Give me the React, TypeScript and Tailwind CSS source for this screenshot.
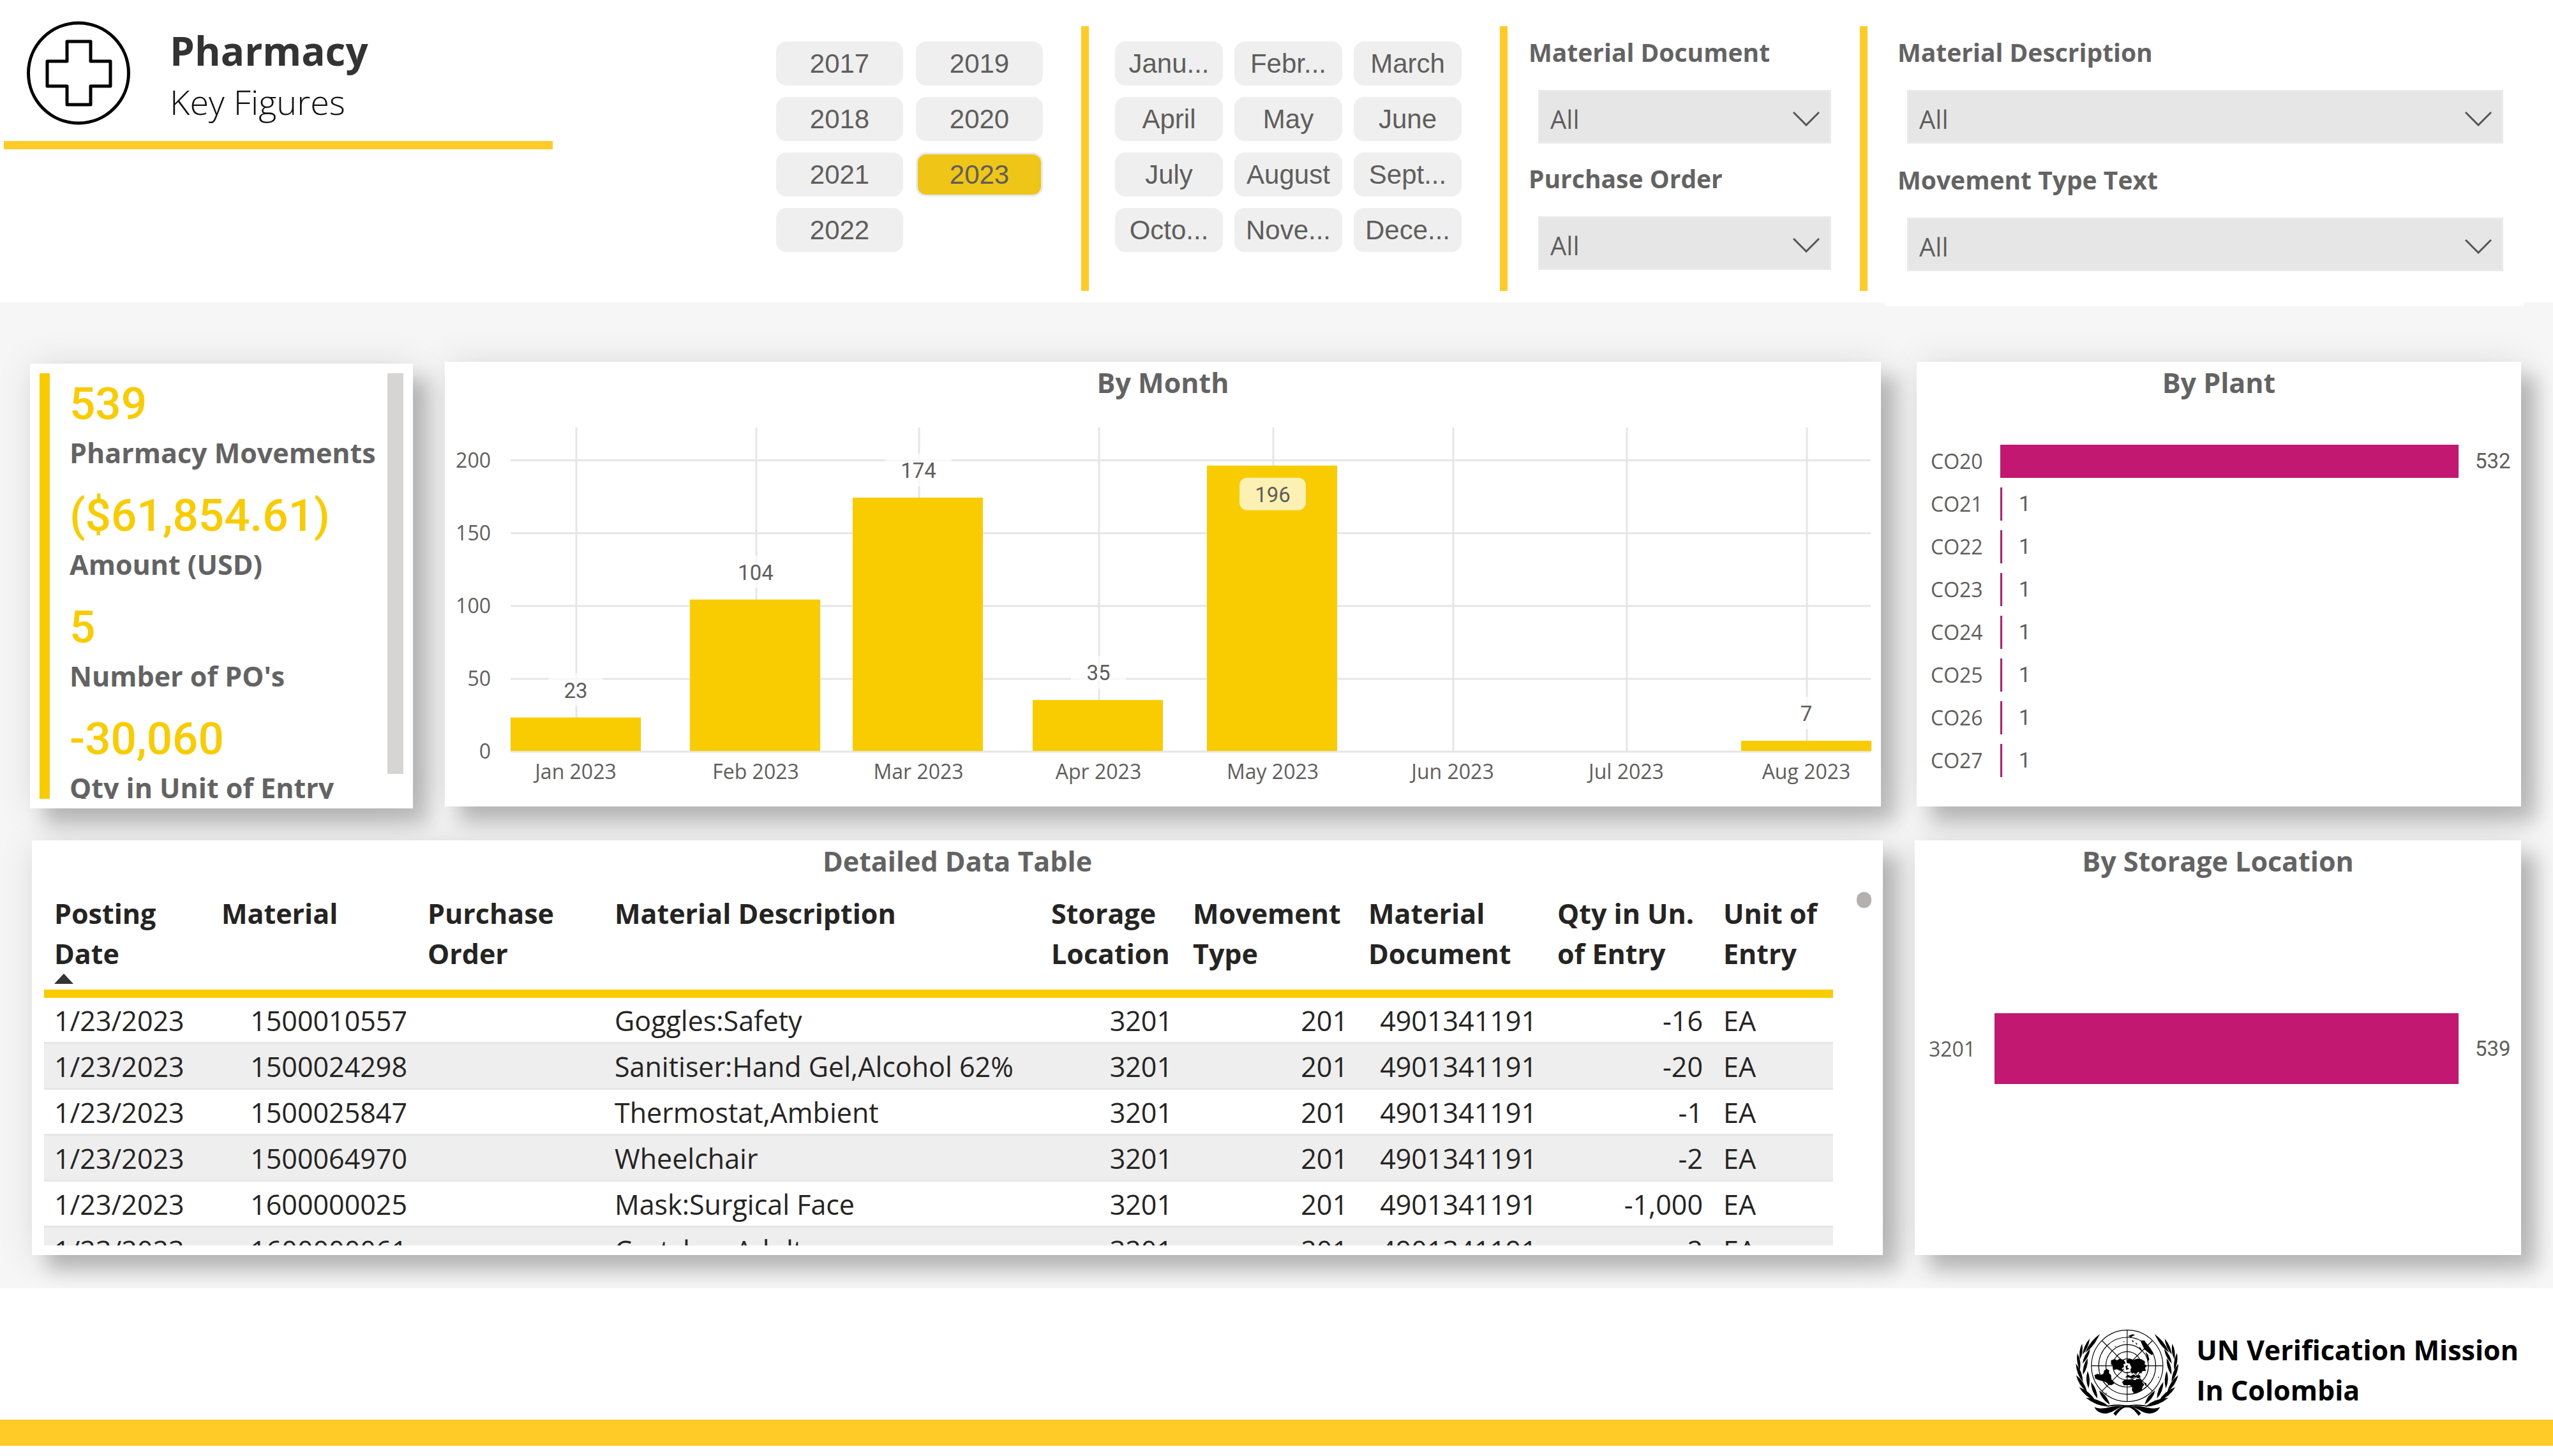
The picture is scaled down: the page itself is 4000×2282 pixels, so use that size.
import { useState } from 'react';
import type { ReactNode } from 'react';

const years = ['2017', '2019', '2018', '2020', '2021', '2023', '2022'];

const months = [
  'Janu...', 'Febr...', 'March',
  'April', 'May', 'June',
  'July', 'August', 'Sept...',
  'Octo...', 'Nove...', 'Dece...',
];

const keyFigures = [
  { value: '539', label: 'Pharmacy Movements' },
  { value: '($61,854.61)', label: 'Amount (USD)' },
  { value: '5', label: "Number of PO's" },
  { value: '-30,060', label: 'Qty in Unit of Entry' },
];

const monthly = [
  { label: 'Jan 2023', x: 206, count: 23 },
  { label: 'Feb 2023', x: 488, count: 104 },
  { label: 'Mar 2023', x: 743, count: 174 },
  { label: 'Apr 2023', x: 1025, count: 35 },
  { label: 'May 2023', x: 1298, count: 196 },
  { label: 'Jun 2023', x: 1580, count: 0 },
  { label: 'Jul 2023', x: 1852, count: 0 },
  { label: 'Aug 2023', x: 2134, count: 7 },
];

const plants = [
  { label: 'CO20', value: 532 },
  { label: 'CO21', value: 1 },
  { label: 'CO22', value: 1 },
  { label: 'CO23', value: 1 },
  { label: 'CO24', value: 1 },
  { label: 'CO25', value: 1 },
  { label: 'CO26', value: 1 },
  { label: 'CO27', value: 1 },
];

const columns = [
  { lines: ['Posting', 'Date'], col: 'w-[262px]', align: 'text-left', sorted: true },
  { lines: ['Material'], col: 'w-[323px]', align: 'text-right' },
  { lines: ['Purchase', 'Order'], col: 'w-[293px]', align: 'text-right' },
  { lines: ['Material Description'], col: 'w-[684px]', align: 'text-left' },
  { lines: ['Storage', 'Location'], col: 'w-[222px]', align: 'text-right' },
  { lines: ['Movement', 'Type'], col: 'w-[275px]', align: 'text-right' },
  { lines: ['Material', 'Document'], col: 'w-[296px]', align: 'text-right' },
  { lines: ['Qty in Un.', 'of Entry'], col: 'w-[260px]', align: 'text-right' },
  { lines: ['Unit of', 'Entry'], col: 'w-[188px]', align: 'text-left' },
];

const rows = [
  ['1/23/2023', '1500010557', '', 'Goggles:Safety', '3201', '201', '4901341191', '-16', 'EA'],
  ['1/23/2023', '1500024298', '', 'Sanitiser:Hand Gel,Alcohol 62%', '3201', '201', '4901341191', '-20', 'EA'],
  ['1/23/2023', '1500025847', '', 'Thermostat,Ambient', '3201', '201', '4901341191', '-1', 'EA'],
  ['1/23/2023', '1500064970', '', 'Wheelchair', '3201', '201', '4901341191', '-2', 'EA'],
  ['1/23/2023', '1600000025', '', 'Mask:Surgical Face', '3201', '201', '4901341191', '-1,000', 'EA'],
  ['1/23/2023', '1600000061', '', 'Crutches,Adult', '3201', '201', '4901341191', '-2', 'EA'],
];

function Chip({ label, active, onClick }: { label: string; active: boolean; onClick: () => void }) {
  return (
    <button
      type="button"
      aria-pressed={active}
      onClick={onClick}
      className={
        active
          ? 'h-[69px] rounded-2xl border-[3px] border-[#e6e9f0] bg-[#efc518] text-[#605e5c]'
          : 'h-[69px] rounded-2xl border-[3px] border-[#efefef] bg-[#efefef] text-[#605e5c]'
      }
    >
      {label}
    </button>
  );
}

function Divider() {
  return <div className="mt-[41px] h-[415px] w-[12px] shrink-0 bg-[#fecb27]" />;
}

function Filter({ id, label }: { id: string; label: string }) {
  return (
    <div>
      <label htmlFor={id} className="block text-[39px] leading-[54px] font-bold text-[#636363]">
        {label}
      </label>
      <div className="relative mt-[32px] ml-[15px]">
        <select
          id={id}
          className="block h-[84px] w-full appearance-none border-[3px] border-[#eaeaea] bg-[#e6e6e6] px-[16px] pt-[8px] text-[40px] text-[#605e5c]"
        >
          <option>All</option>
        </select>
        <svg
          viewBox="0 0 42 24"
          className="pointer-events-none absolute top-[33px] right-[18px] h-[24px] w-[42px]"
          fill="none"
          stroke="#555"
          strokeWidth="3"
        >
          <path d="M1 2 L21 22 L41 2" />
        </svg>
      </div>
    </div>
  );
}

function Card({ title, className, children }: { title?: string; className: string; children: ReactNode }) {
  return (
    <section
      className={`relative bg-white shadow-[24px_24px_28px_rgba(0,0,0,0.21),4px_4px_56px_rgba(0,0,0,0.12)] ${className}`}
    >
      {title && (
        <h2 className="pt-[3px] text-center text-[43px] leading-[60px] font-bold text-[#636363]">{title}</h2>
      )}
      {children}
    </section>
  );
}

function MonthChart() {
  const base = 547;
  const unit = 2.282;
  const barLeft = (x: number) => (x === 206 ? 103 : x === 2134 ? 2031 : x - 104);

  return (
    <svg viewBox="0 0 2250 634" className="block w-full" role="img" aria-label="Movements by month">
      <g stroke="#e6e6e6" strokeWidth="3">
        {[0, 50, 100, 150, 200].map((tick) => (
          <line key={tick} x1="103" x2="2234" y1={base + 1 - tick * unit} y2={base + 1 - tick * unit} />
        ))}
        {monthly.map((m) => (
          <line key={m.label} x1={m.x} x2={m.x} y1="40" y2={base} />
        ))}
      </g>
      <g className="fill-[#605e5c] text-[32px]" textAnchor="end">
        {[0, 50, 100, 150, 200].map((tick) => (
          <text key={tick} x="72" y={base + 12 - tick * unit}>
            {tick}
          </text>
        ))}
      </g>
      {monthly.map((m) => {
        const top = base - m.count * unit;
        const inside = m.count > 190;
        const pill = m.count > 99 ? 104 : m.count > 9 ? 86 : 68;
        const pillTop = inside ? top + 19 : top - 69;
        return (
          <g key={m.label} textAnchor="middle" className="fill-[#605e5c] text-[32px]">
            {m.count > 0 && (
              <>
                <rect x={barLeft(m.x)} y={top} width="204" height={m.count * unit} fill="#f8cc00" />
                <rect x={m.x - 1 - pill / 2} y={pillTop} width={pill} height="51" rx="12" fill="#fff" fillOpacity="0.7" />
                <text x={m.x - 1} y={pillTop + 38} className="font-[Roboto] text-[33px]">
                  {m.count}
                </text>
              </>
            )}
            <text x={m.x - 1} y="591">
              {m.label}
            </text>
          </g>
        );
      })}
    </svg>
  );
}

function HBar({ label, value, max, tall }: { label: string; value: number; max: number; tall?: boolean }) {
  return (
    <div className={`flex items-center pl-[22px] ${tall ? 'h-[111px]' : 'h-[67px]'}`}>
      <span className={`shrink-0 text-[32px] ${tall ? 'w-[103px]' : 'w-[109px]'}`}>{label}</span>
      <div className="flex flex-1 items-center pr-[98px]">
        <div
          className={`min-w-[3px] shrink-0 bg-[#c31872] ${tall ? 'h-[111px]' : 'h-[52px]'}`}
          style={{ width: `${(value / max) * 100}%` }}
        />
        <span className="ml-[26px] font-[Roboto] text-[33px]">{value}</span>
      </div>
    </div>
  );
}

// Leaves of the left branch: [base x, base y, tip x, tip y, width]
const leaves = [
  [88, 138, 152, 62, 13], [70, 160, 104, 84, 13], [58, 182, 68, 108, 13],
  [58, 232, 46, 152, 14], [72, 288, 39, 202, 16], [92, 336, 40, 256, 17],
  [132, 378, 54, 312, 18], [196, 404, 86, 362, 20],
  [82, 150, 138, 88, 11], [70, 202, 106, 132, 14], [72, 254, 94, 176, 15],
  [98, 318, 94, 236, 15], [140, 366, 110, 288, 16], [198, 394, 148, 328, 17],
];

function leafPath([bx, by, tx, ty, w]: number[]) {
  const mx = (bx + tx) / 2;
  const my = (by + ty) / 2;
  const len = Math.hypot(tx - bx, ty - by);
  const nx = (-(ty - by) / len) * w;
  const ny = ((tx - bx) / len) * w;
  return `M${bx} ${by}Q${mx + nx} ${my + ny} ${tx} ${ty}Q${mx - nx} ${my - ny} ${bx} ${by}Z`;
}

function Branch() {
  return (
    <>
      {leaves.map((leaf) => (
        <path key={leaf.join()} d={leafPath(leaf)} />
      ))}
      <path d="M126 406C170 426 208 392 264 404C232 404 204 446 160 434C144 430 132 420 126 406Z" />
      <path d="M176 402C210 392 240 392 296 400L290 407C262 404 248 418 226 447L215 436C228 420 244 408 262 402C230 398 204 404 176 402Z" />
    </>
  );
}

function Emblem() {
  return (
    <svg viewBox="38 42 482 408" className="h-[136px] w-[161px]" role="img" aria-label="United Nations emblem">
      <g fill="none" stroke="#000" strokeWidth="3.5">
        {[168, 134, 100, 67, 33].map((r) => (
          <circle key={r} cx="280" cy="212" r={r} />
        ))}
        <path d="M280 44V380M112 212H448M161 93L399 331M399 93L161 331" />
      </g>
      <g>
        <path d="M204 186L222 180L232 186L246 178L262 184L272 196L262 206L268 216L254 224L262 232L248 236L232 228L220 232L212 222L216 210L204 206Z" />
        <path d="M172 234L184 226L196 234L194 246L204 256L206 276L220 294L208 302L194 302L182 290L166 284L148 280L130 272L126 256L140 250L156 254L168 250Z" />
        <path d="M276 186L292 178L310 184L330 178L350 182L364 192L362 204L372 212L364 222L368 236L352 236L346 248L332 240L324 250L312 244L302 250L296 236L300 218L290 206L280 200Z" />
        <path d="M256 288L270 276L290 278L304 276L318 280L324 274L342 274L352 290L360 300L352 312L348 328L326 340L312 342L302 326L304 310L290 302L264 304Z" />
        <path d="M342 94L360 92L374 110L388 128L404 154L396 162L380 150L362 136L352 116Z" />
        <path d="M270 266L284 254L296 260L310 252L322 260L338 254L344 266L330 270L316 264L302 272L288 266Z" />
        <path d="M284 72L304 64L318 66L306 72L298 78ZM302 90L312 96L306 102ZM318 102L328 108L324 114ZM336 122L344 128L350 144L340 136ZM366 146L378 160L384 182L376 196L374 178ZM362 290L370 294L370 306L364 304ZM262 96L268 98L264 102ZM222 118L228 121L223 124ZM426 262L431 266L426 270ZM178 338L184 341L180 346Z" />
      </g>
      <path d="M264 210L276 198L292 202L298 216L292 234L278 240L266 230Z" fill="#fff" />
      <path d="M272 214L284 208L280 220L290 226L276 232Z" />
      <Branch />
      <g transform="translate(560 0) scale(-1 1)">
        <Branch />
      </g>
    </svg>
  );
}

export default function App() {
  const [year, setYear] = useState('2023');
  const [month, setMonth] = useState('');

  return (
    <div className="bg-white font-['Open_Sans','Noto_Sans',sans-serif] text-[#605e5c]">
      {/* Title and slicers */}
      <header className="flex">
        <div className="w-[1216px] shrink-0 pt-[33px] pb-[240px]">
          <div className="flex gap-[62px] pl-[42px]">
            <svg viewBox="0 0 162 163" className="h-[163px] w-[162px]" fill="none" stroke="#000" strokeWidth="5">
              <circle cx="81" cy="81.5" r="78.5" />
              <path d="M63 32H100V63H131V102H100V131H63V102H32V63H63Z" strokeLinejoin="round" />
            </svg>
            <div className="pt-[4px]">
              <h1 className="text-[62px] leading-[84px] font-bold text-[#333]">Pharmacy</h1>
              <p className="text-[54px] leading-[76px] font-light text-[#111]">Key Figures</p>
            </div>
          </div>
          <div className="mt-[24px] ml-[6px] h-[13px] w-[860px] bg-[#fecb27]" />
        </div>

        <div className="mr-[60px] grid w-[418px] shrink-0 grid-cols-2 content-start gap-x-[20px] gap-y-[18px] pt-[65px] font-['Liberation_Sans',sans-serif] text-[42px]">
          {years.map((y) => (
            <Chip key={y} label={y} active={y === year} onClick={() => setYear(y)} />
          ))}
        </div>
        <Divider />
        <div className="mr-[60px] ml-[41px] grid w-[543px] shrink-0 grid-cols-3 content-start gap-x-[18px] gap-y-[18px] pt-[65px] font-['Liberation_Sans',sans-serif] text-[42px]">
          {months.map((m) => (
            <Chip key={m} label={m} active={m === month} onClick={() => setMonth(m)} />
          ))}
        </div>
        <Divider />
        <div className="mr-[45px] ml-[33px] flex w-[474px] shrink-0 flex-col gap-[28px] pt-[55px]">
          <Filter id="material-document" label="Material Document" />
          <Filter id="purchase-order" label="Purchase Order" />
        </div>
        <Divider />
        <div className="relative z-10 mr-[46px] -mb-[6px] ml-[27px] flex flex-1 flex-col gap-[30px] bg-white pt-[55px] pr-[32px] pl-[20px]">
          <Filter id="material-description" label="Material Description" />
          <Filter id="movement-type" label="Movement Type Text" />
        </div>
      </header>

      <main className="overflow-hidden bg-[#f6f6f6] pt-[93px] pr-[50px] pb-[52px]">
        <div className="flex items-start gap-[50px] pl-[47px]">
          <Card className="mt-[3px] w-[600px] shrink-0 px-[15px] py-[15px]">
            <div className="flex h-[667px] overflow-hidden">
              <div className="w-[16px] bg-[#f8cc00]" />
              <dl className="flex-1 pl-[31px]">
                {keyFigures.map((f) => (
                  <div key={f.label} className="flex h-[175px] flex-col-reverse justify-end whitespace-nowrap">
                    <dt className="text-[43px] leading-[60px] font-bold text-[#636363]">{f.label}</dt>
                    <dd className="font-[Roboto] text-[71px] leading-[95px] font-medium text-[#f8cc00]">{f.value}</dd>
                  </div>
                ))}
              </dl>
              <div className="h-[628px] w-[25px] bg-[#d6d5d3]" />
            </div>
          </Card>

          <Card title="By Month" className="flex-1">
            <MonthChart />
          </Card>

          <Card title="By Plant" className="ml-[6px] h-[697px] w-[947px] shrink-0">
            <div className="mt-[59px]">
              {plants.map((p) => (
                <HBar key={p.label} label={p.label} value={p.value} max={532} />
              ))}
            </div>
          </Card>
        </div>

        <div className="mt-[50px] flex gap-[50px] pl-[50px]">
          <Card title="Detailed Data Table" className="flex flex-1 flex-col pb-[15px]">
            <div className="flex h-[572px] items-start justify-between overflow-hidden pr-[18px] pl-[19px]">
              <table className="mr-[37px] w-full table-fixed border-separate border-spacing-0 text-[43px] text-[#252423]">
                <thead>
                  <tr>
                    {columns.map((c) => (
                      <th
                        key={c.lines.join(' ')}
                        className={`${c.col} border-b-[13px] border-[#f8cc00] px-[16px] pt-[20px] pb-[9px] text-left align-top leading-[63px] font-bold whitespace-nowrap`}
                      >
                        {c.lines.map((line) => (
                          <div key={line}>{line}</div>
                        ))}
                        {c.sorted && (
                          <svg viewBox="0 0 30 16" className="block h-[16px] w-[30px]" fill="#333">
                            <path d="M15 0L30 16H0Z" />
                          </svg>
                        )}
                      </th>
                    ))}
                  </tr>
                </thead>
                <tbody>
                  {rows.map((row) => (
                    <tr key={row[1]} className="even:bg-[#eeeeee]">
                      {row.map((cell, i) => (
                        <td
                          key={columns[i].lines.join(' ')}
                          className={`border-b-[3px] border-[#e6e6e6] px-[16px] pt-[3px] leading-[66px] whitespace-nowrap ${columns[i].align}`}
                        >
                          {cell}
                        </td>
                      ))}
                    </tr>
                  ))}
                </tbody>
              </table>
              <div className="mt-[18px] h-[25px] w-[23px] shrink-0 rounded-full bg-[#b3b0ad]" />
            </div>
          </Card>

          <Card title="By Storage Location" className="w-[950px] shrink-0">
            <div className="pt-[208px]">
              <HBar label="3201" value={539} max={539} tall />
            </div>
          </Card>
        </div>
      </main>

      <footer className="pb-[15px]">
        <div className="flex justify-end gap-[28px] pt-[65px] pr-[54px] pb-[5px]">
          <Emblem />
          <p className="text-[43px] leading-[63px] font-bold text-black">
            UN Verification Mission
            <br />
            In Colombia
          </p>
        </div>
        <div className="h-[41px] bg-[#fecb27]" />
      </footer>
    </div>
  );
}
